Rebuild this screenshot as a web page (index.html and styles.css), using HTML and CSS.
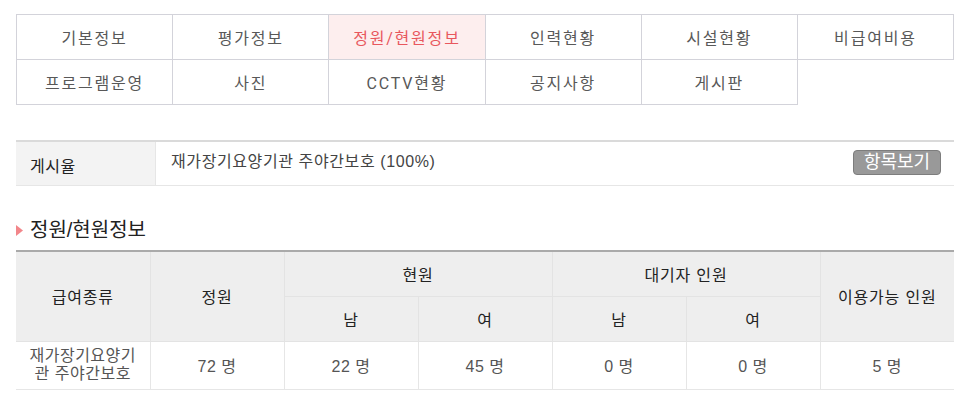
FILE: index.html
```html
<!DOCTYPE html>
<html lang="ko">
<head>
<meta charset="utf-8">
<link rel="stylesheet" href="styles.css">
</head>
<body>
<div class="page">
  <ul class="tabs">
    <li class="tab">기본정보</li>
    <li class="tab">평가정보</li>
    <li class="tab active">정원/현원정보</li>
    <li class="tab">인력현황</li>
    <li class="tab">시설현황</li>
    <li class="tab">비급여비용</li>
    <li class="tab">프로그램운영</li>
    <li class="tab">사진</li>
    <li class="tab">CCTV현황</li>
    <li class="tab">공지사항</li>
    <li class="tab">게시판</li>
  </ul>

  <div class="info">
    <div class="info-label">게시율</div>
    <div class="info-value">
      <span class="info-text">재가장기요양기관 주야간보호 (100%)</span>
      <button class="btn">항목보기</button>
    </div>
  </div>

  <h2 class="section-title">
    <svg class="bullet" width="7" height="11" viewBox="0 0 7 11"><path d="M0 0 L7 5.5 L0 11 Z" fill="#f2868a"/></svg>
    정원/현원정보
  </h2>

  <table class="grid">
    <thead>
      <tr class="h1">
        <th rowspan="2">급여종류</th>
        <th rowspan="2">정원</th>
        <th colspan="2">현원</th>
        <th colspan="2">대기자 인원</th>
        <th rowspan="2">이용가능 인원</th>
      </tr>
      <tr class="h2">
        <th>남</th>
        <th>여</th>
        <th>남</th>
        <th>여</th>
      </tr>
    </thead>
    <tbody>
      <tr>
        <td class="kind">재가장기요양기관 주야간보호</td>
        <td>72 명</td>
        <td>22 명</td>
        <td>45 명</td>
        <td>0 명</td>
        <td>0 명</td>
        <td>5 명</td>
      </tr>
    </tbody>
  </table>
</div>
</body>
</html>
```

FILE: styles.css
```css
* { box-sizing: border-box; }
html, body { margin: 0; padding: 0; background: #fff; }
body {
  font-family: "Liberation Sans", "Noto Sans CJK KR", sans-serif;
  font-size: 16px;
  color: #555;
}
.page {
  width: 938px;
  margin-left: 16px;
  padding-top: 14px;
}
.tabs {
  list-style: none;
  margin: 0;
  padding: 0;
  display: grid;
  grid-template-columns: repeat(6, 1fr);
  border-top: 1px solid #d3d3da;
  border-left: 1px solid #d3d3da;
}
.tab {
  height: 45px;
  border-right: 1px solid #d3d3da;
  border-bottom: 1px solid #d3d3da;
  display: flex;
  align-items: center;
  justify-content: center;
  font-family: Roboto, "Noto Sans CJK KR", sans-serif;
  font-size: 16px;
  letter-spacing: 1.8px;
  color: #585858;
}
.tab.active {
  background: #fdeeee;
  color: #e8575d;
}
.info {
  margin-top: 35px;
  display: flex;
  height: 46px;
  border-top: 2px solid #dadada;
  border-bottom: 1px solid #e6e6e6;
}
.info-label {
  width: 140px;
  background: #f3f3f3;
  border-right: 1px solid #e6e6e6;
  display: flex;
  align-items: center;
  padding-left: 14px;
  padding-top: 2px;
  color: #222;
  font-size: 16px;
  letter-spacing: 0.5px;
}
.info-value {
  flex: 1;
  display: flex;
  justify-content: space-between;
  align-items: flex-start;
  padding: 6px 13px 0 15px;
}
.info-text {
  color: #444;
  font-size: 16px;
  letter-spacing: 0.6px;
}
.btn {
  margin-top: 2px;
  width: 88px;
  height: 25px;
  padding: 0;
  background: #999;
  border: 1px solid #7d7d7d;
  border-radius: 4px;
  color: #fff;
  font-family: "Liberation Sans", "Noto Sans CJK KR", sans-serif;
  font-size: 18px;
  line-height: 21px;
}
.section-title {
  margin: 26px 0 0;
  height: 33px;
  display: flex;
  align-items: center;
  font-size: 20px;
  font-weight: normal;
  color: #222;
}
.bullet {
  margin: 4px 7px 0 0;
}
.grid {
  margin-top: 5px;
  width: 938px;
  border-collapse: collapse;
  table-layout: fixed;
  border-top: 2px solid #aaa;
}
.grid th {
  background: #eee;
  font-weight: normal;
  color: #222;
  height: 45px;
  border: 1px solid #e3e3e3;
  border-top: none;
  font-size: 16px;
  letter-spacing: 0.8px;
}
.grid tr > :first-child { border-left: none; }
.grid tr > :last-child { border-right: none; }
.grid .h1 th[rowspan] { height: 90px; }
.grid .h1 th:last-child { border-right: none; }
.grid td {
  height: 48px;
  text-align: center;
  color: #555;
  border: 1px solid #e6e6e6;
  border-top: none;
  font-size: 16px;
  letter-spacing: 0.5px;
}
.grid td.kind {
  line-height: 18px;
  padding: 0 8px;
}
```
